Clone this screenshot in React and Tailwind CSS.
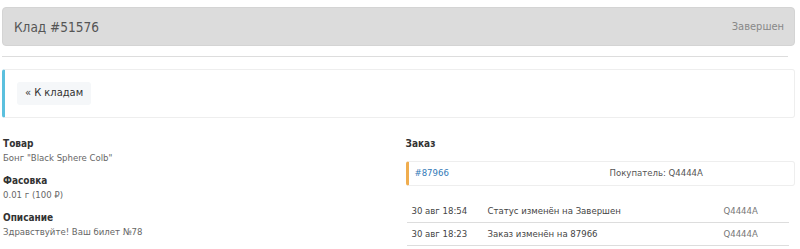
import React from "react";

const font = { fontFamily: '"DejaVu Sans Condensed", "DejaVu Sans", Verdana, sans-serif' };

const history = [
  { date: "30 авг 18:54", text: "Статус изменён на Завершен", user: "Q4444A" },
  { date: "30 авг 18:23", text: "Заказ изменён на 87966", user: "Q4444A" },
];

const Field = ({ label, value }) => (
  <div className="mb-[9px]">
    <div className="text-[10px] font-bold leading-[14px] text-[#333]">{label}</div>
    <div className="text-[9.5px] leading-[14px] text-[#666]">{value}</div>
  </div>
);

export default function App() {
  return (
    <div className="bg-white w-[800px] h-[249px] overflow-hidden pl-[2px] pr-[5px] pt-[7px]" style={font}>
      {/* Header */}
      <div className="flex items-center justify-between h-[39px] rounded-[4px] bg-[#dcdcdc] border border-[#d4d4d4] pl-[11px] pr-[10px]">
        <h1 className="text-[13.5px] text-[#555] pt-[1px]">Клад #51576</h1>
        <span className="text-[11px] text-[#888] pt-[1px]">Завершен</span>
      </div>

      <hr className="mt-[10px] mr-[7px] border-t border-[#ddd]" />

      {/* Back card */}
      <div className="mt-[12px] h-[49px] flex items-center border border-[#eee] border-l-[3px] border-l-[#5bc0de] rounded-[3px] pl-[12px]">
        <button className="bg-[#f5f7f9] rounded-[3px] h-[23px] px-[8px] text-[11px] text-[#333]">
          « К кладам
        </button>
      </div>

      {/* Body */}
      <div className="grid grid-cols-2 gap-[14px] mt-[19px]">
        <div className="pl-[1px]">
          <Field label="Товар" value={'Бонг "Black Sphere Colb"'} />
          <Field label="Фасовка" value="0.01 г (100 ₽)" />
          <Field label="Описание" value="Здравствуйте! Ваш билет №78" />
        </div>

        <div>
          <div className="text-[10px] font-bold leading-[14px] text-[#333]">Заказ</div>
          <div className="mt-[10px] h-[25px] flex items-center border border-[#eee] border-l-[3px] border-l-[#f0ad4e] rounded-[3px] pl-[6px] text-[9.5px]">
            <a className="text-[#337ab7] w-[195px]">#87966</a>
            <span className="text-[#555]">Покупатель: Q4444A</span>
          </div>

          <table className="mt-[13px] w-[382px] ml-[1px] text-[9.5px] text-[#444]">
            <tbody>
              {history.map((r) => (
                <tr key={r.date} className="border-b border-[#ddd] h-[23px]">
                  <td className="pl-[5px] w-[81px] pt-[1px]">{r.date}</td>
                  <td className="pt-[1px]">{r.text}</td>
                  <td className="w-[65px] text-[#777] pt-[1px]">{r.user}</td>
                </tr>
              ))}
            </tbody>
          </table>
        </div>
      </div>
    </div>
  );
}
